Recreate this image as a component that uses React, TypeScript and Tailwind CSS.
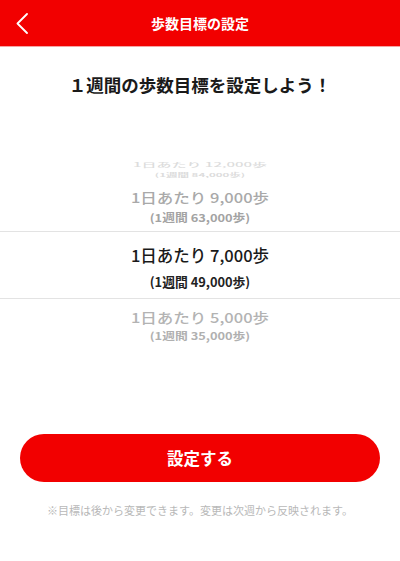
import React from "react";

const font = { fontFamily: '"Noto Sans CJK JP", "Noto Sans", sans-serif' };

export default function App() {
  return (
    <div className="w-[400px] h-[561px] bg-white flex flex-col overflow-hidden" style={font}>
      {/* Header */}
      <div className="h-[46px] bg-[#f20000] grid grid-cols-[60px_1fr_60px] items-center shrink-0">
        <div className="pl-[16px] flex items-center">
          <svg width="13" height="21" viewBox="0 0 13 21" fill="none">
            <path d="M11 1 L1.5 10.5 L11 20" stroke="white" strokeWidth="1.8" strokeLinecap="round" strokeLinejoin="round" />
          </svg>
        </div>
        <div className="text-center text-white font-bold text-[14px] leading-[20px]">歩数目標の設定</div>
        <div />
      </div>
      <div className="h-px bg-[#f6a3a3] shrink-0" />

      {/* Title */}
      <div className="mt-[25px] h-[26px] leading-[26px] text-center font-bold text-[17.5px] text-[#1a1a1a] shrink-0">
        １週間の歩数目標を設定しよう！
      </div>

      {/* Picker */}
      <div className="mt-[61px] flex flex-col items-center shrink-0">
        <div className="h-[12px] leading-[12px] text-[15px] font-medium text-[#dcdcdc] scale-y-[0.4] whitespace-nowrap">
          1日あたり 12,000歩
        </div>
        <div className="h-[7px] leading-[7px] text-[11.5px] font-bold text-[#dcdcdc] scale-y-[0.45] whitespace-nowrap">
          (1週間 84,000歩)
        </div>

        <div className="mt-[10px] h-[19px] leading-[19px] text-[16.5px] font-medium text-[#a9a9a9] scale-y-[0.8] whitespace-nowrap">
          1日あたり 9,000歩
        </div>
        <div className="mt-[4px] h-[14px] leading-[14px] text-[12.8px] font-bold text-[#a3a3a3] scale-y-[0.85] whitespace-nowrap">
          (1週間 63,000歩)
        </div>
      </div>

      <div className="mt-[6px] h-px bg-[#e3e3e3] shrink-0" />

      <div className="flex flex-col items-center shrink-0">
        <div className="mt-[12px] h-[22px] leading-[22px] text-[16.5px] font-medium text-[#1a1a1a] whitespace-nowrap">
          1日あたり 7,000歩
        </div>
        <div className="mt-[8px] h-[16px] leading-[16px] text-[12.8px] font-bold text-[#222222] whitespace-nowrap">
          (1週間 49,000歩)
        </div>
      </div>

      <div className="mt-[8px] h-px bg-[#e3e3e3] shrink-0" />

      <div className="flex flex-col items-center shrink-0">
        <div className="mt-[9px] h-[19px] leading-[19px] text-[16.5px] font-medium text-[#b3b3b3] scale-y-[0.8] whitespace-nowrap">
          1日あたり 5,000歩
        </div>
        <div className="mt-[2px] h-[14px] leading-[14px] text-[12.8px] font-bold text-[#b0b0b0] scale-y-[0.8] whitespace-nowrap">
          (1週間 35,000歩)
        </div>
      </div>

      {/* Button */}
      <div className="mt-[91px] px-[20px] shrink-0">
        <button className="w-full h-[48px] rounded-full bg-[#f20000] text-white font-bold text-[16.5px] flex items-center justify-center">
          設定する
        </button>
      </div>

      <div className="mt-[20px] h-[16px] leading-[16px] text-center text-[11px] text-[#b8b8b8] whitespace-nowrap shrink-0">
        ※目標は後から変更できます。変更は次週から反映されます。
      </div>
    </div>
  );
}
